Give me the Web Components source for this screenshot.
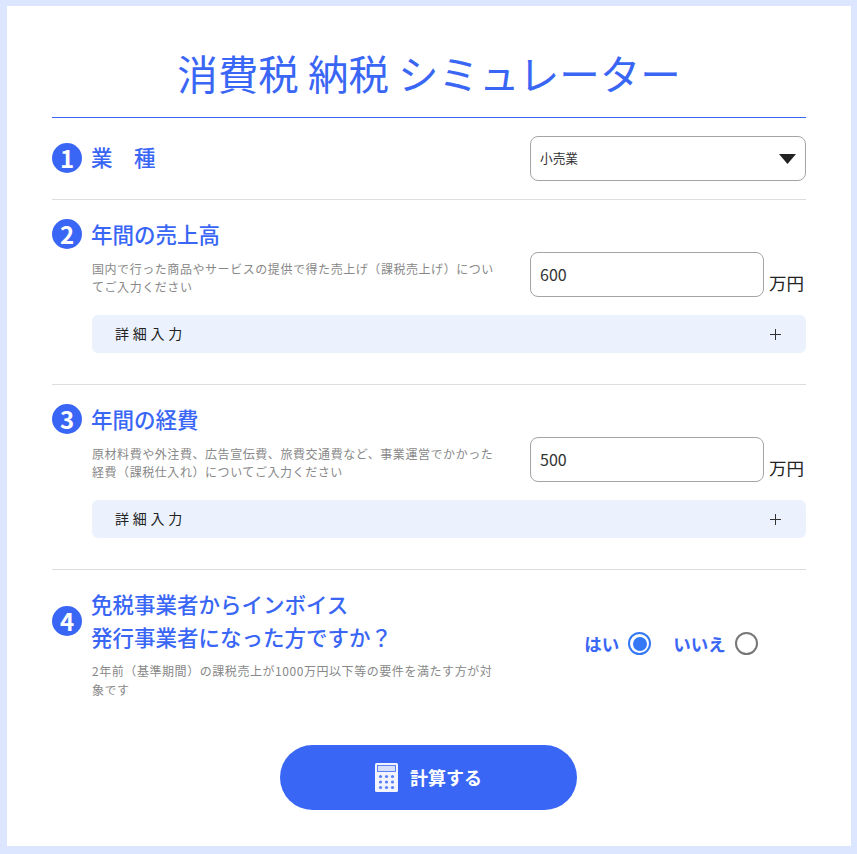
<!DOCTYPE html>
<html lang="ja">
<head>
<meta charset="utf-8">
<title>消費税 納税 シミュレーター</title>
<style>
  html, body { margin: 0; padding: 0; }
  body {
    font-family: "Noto Sans CJK JP", "Noto Sans", sans-serif;
    color: #222;
    background: #fff;
  }
</style>
</head>
<body>
<tax-simulator>
  <sim-section num="1" inline>
    <span slot="title">業　種</span>
    <sim-select slot="control">小売業</sim-select>
  </sim-section>
  <sim-section num="2">
    <span slot="title">年間の売上高</span>
    <span slot="desc">国内で行った商品やサービスの提供で得た売上げ（課税売上げ）についてご入力ください</span>
    <sim-amount slot="control">600</sim-amount>
    <detail-bar slot="details">詳細入力</detail-bar>
  </sim-section>
  <sim-section num="3">
    <span slot="title">年間の経費</span>
    <span slot="desc">原材料費や外注費、広告宣伝費、旅費交通費など、事業運営でかかった経費（課税仕入れ）についてご入力ください</span>
    <sim-amount slot="control">500</sim-amount>
    <detail-bar slot="details">詳細入力</detail-bar>
  </sim-section>
  <sim-question num="4">
    <span slot="title">免税事業者からインボイス<br>発行事業者になった方ですか？</span>
    <span slot="desc">2年前（基準期間）の課税売上が1000万円以下等の要件を満たす方が対象です</span>
    <radio-choice slot="control" checked>はい</radio-choice>
    <radio-choice slot="control">いいえ</radio-choice>
  </sim-question>
  <calc-button>計算する</calc-button>
</tax-simulator>

<script>
// Shared values for the simulator components
const BLUE = '#3a66f5';

class TaxSimulator extends HTMLElement {
  constructor() {
    super();
    this.attachShadow({ mode: 'open' });
    this.shadowRoot.innerHTML = `
      <style>
        :host {
          display: block;
          box-sizing: border-box;
          width: 857px;
          height: 854px;
          border-style: solid;
          border-color: #dde6ff;
          border-width: 6px 6px 8px 7px;
          background: #fff;
          padding: 0 45px;
        }
        h1 {
          margin: 0;
          padding: 36px 0 14px;
          font-size: 40.5px;
          font-weight: 400;
          line-height: 61px;
          text-align: center;
          color: ${BLUE};
          border-bottom: 1px solid ${BLUE};
        }
      </style>
      <h1>消費税 納税 シミュレーター</h1>
      <slot></slot>
    `;
  }
}

class NumBadge extends HTMLElement {
  constructor() {
    super();
    this.attachShadow({ mode: 'open' });
    this.shadowRoot.innerHTML = `
      <style>
        :host {
          display: flex;
          flex: none;
          align-items: center;
          justify-content: center;
          width: 30px;
          height: 30px;
          border-radius: 50%;
          background: ${BLUE};
          color: #fff;
          font-size: 24px;
          font-weight: 700;
          line-height: 1;
        }
      </style>
      <slot></slot>
    `;
  }
}

class SimSection extends HTMLElement {
  constructor() {
    super();
    this.attachShadow({ mode: 'open' });
    const num = this.getAttribute('num');
    this.shadowRoot.innerHTML = `
      <style>
        :host {
          display: block;
          padding: 19px 0 31px;
          border-bottom: 1px solid #ddd;
        }
        :host([inline]) {
          padding: 18px 0;
        }
        :host([inline]) .main {
          display: flex;
          align-items: center;
          justify-content: space-between;
        }
        :host([inline]) .head {
          margin-bottom: 1px;
        }
        :host([inline]) .title {
          margin-bottom: 3px;
        }
        .head {
          display: flex;
          align-items: center;
          gap: 9px;
          height: 30px;
          color: ${BLUE};
          font-size: 21.5px;
          font-weight: 500;
          line-height: 28px;
        }
        .title {
          margin-bottom: 1px;
        }
        .body {
          display: flex;
          align-items: flex-start;
          justify-content: space-between;
          margin-top: 3px;
        }
        :host([inline]) .body { margin: 0; }
        .desc {
          width: 405px;
          margin: 7.5px 0 0 40px;
          font-size: 12px;
          letter-spacing: 0.56px;
          line-height: 18.5px;
          color: #888;
        }
        :host([inline]) .desc { display: none; }
        .details { margin: 18px 0 0 40px; }
        :host([inline]) .details { display: none; }
      </style>
      <div class="main">
        <div class="head"><num-badge>${num}</num-badge><div class="title"><slot name="title"></slot></div></div>
        <div class="body">
          <div class="desc"><slot name="desc"></slot></div>
          <slot name="control"></slot>
        </div>
      </div>
      <div class="details"><slot name="details"></slot></div>
    `;
  }
}

class SimQuestion extends HTMLElement {
  constructor() {
    super();
    this.attachShadow({ mode: 'open' });
    const num = this.getAttribute('num');
    this.shadowRoot.innerHTML = `
      <style>
        :host {
          display: flex;
          align-items: center;
          justify-content: space-between;
          padding: 17px 0 0;
        }
        .head {
          display: flex;
          align-items: center;
          gap: 9px;
          color: ${BLUE};
          font-size: 21.5px;
          font-weight: 500;
          line-height: 33px;
        }
        .title {
          padding-bottom: 2px;
        }
        .desc {
          width: 405px;
          margin: 6px 0 0 40px;
          font-size: 12px;
          letter-spacing: 0.56px;
          line-height: 19px;
          color: #888;
        }
        .choices {
          display: flex;
          gap: 22px;
          justify-content: center;
          box-sizing: border-box;
          width: 276px;
          margin-top: 1px;
          padding-left: 6px;
        }
      </style>
      <div>
        <div class="head"><num-badge>${num}</num-badge><div class="title"><slot name="title"></slot></div></div>
        <div class="desc"><slot name="desc"></slot></div>
      </div>
      <div class="choices"><slot name="control"></slot></div>
    `;
  }
}

class SimSelect extends HTMLElement {
  constructor() {
    super();
    this.attachShadow({ mode: 'open' });
    this.shadowRoot.innerHTML = `
      <style>
        :host {
          display: flex;
          align-items: center;
          justify-content: space-between;
          box-sizing: border-box;
          width: 276px;
          height: 45px;
          padding: 0 9px 2px;
          border: 1px solid #a5a5a5;
          border-radius: 8px;
          font-size: 12.7px;
          color: #333;
        }
        svg { display: block; margin-top: 2px; }
      </style>
      <slot></slot>
      <svg width="17" height="10" viewBox="0 0 17 10"><path d="M0 0H17L8.5 10Z" fill="#222"/></svg>
    `;
  }
}

class SimAmount extends HTMLElement {
  constructor() {
    super();
    this.attachShadow({ mode: 'open' });
    this.shadowRoot.innerHTML = `
      <style>
        :host {
          display: flex;
          align-items: flex-end;
          gap: 5px;
          width: 276px;
        }
        .box {
          display: flex;
          align-items: center;
          box-sizing: border-box;
          width: 234px;
          height: 45px;
          padding: 0 9px 2px;
          border: 1px solid #a5a5a5;
          border-radius: 8px;
          font-size: 16px;
          color: #333;
        }
        .unit {
          padding-bottom: 1px;
          font-size: 17.5px;
          line-height: 26px;
          color: #222;
        }
      </style>
      <div class="box"><slot></slot></div>
      <span class="unit">万円</span>
    `;
  }
}

class DetailBar extends HTMLElement {
  constructor() {
    super();
    this.attachShadow({ mode: 'open' });
    this.shadowRoot.innerHTML = `
      <style>
        :host {
          display: flex;
          align-items: center;
          justify-content: space-between;
          box-sizing: border-box;
          height: 38px;
          padding: 0 25px 2px 23px;
          border-radius: 6px;
          background: #ebf2fe;
          font-size: 14px;
          font-weight: 400;
          letter-spacing: 0.27em;
          color: #222;
        }
        svg { display: block; margin-top: 2px; }
      </style>
      <span><slot></slot></span>
      <svg width="11" height="11" viewBox="0 0 11 11"><path d="M5.5 0V11M0 5.5H11" stroke="#333" fill="none"/></svg>
    `;
  }
}

class RadioChoice extends HTMLElement {
  constructor() {
    super();
    this.attachShadow({ mode: 'open' });
    this.shadowRoot.innerHTML = `
      <style>
        :host {
          display: flex;
          align-items: center;
          gap: 9px;
          color: ${BLUE};
          font-size: 17.5px;
          font-weight: 700;
        }
        .ring {
          box-sizing: border-box;
          width: 23px;
          height: 23px;
          padding: 2.5px;
          border: 2px solid #777;
          border-radius: 50%;
          background-clip: content-box;
        }
        :host([checked]) .ring {
          border-color: #3478f6;
          background-color: #3478f6;
        }
      </style>
      <span><slot></slot></span>
      <span class="ring"></span>
    `;
  }
}

class CalcButton extends HTMLElement {
  constructor() {
    super();
    this.attachShadow({ mode: 'open' });
    this.shadowRoot.innerHTML = `
      <style>
        :host {
          display: flex;
          align-items: center;
          justify-content: center;
          gap: 12px;
          box-sizing: border-box;
          width: 297px;
          height: 65px;
          margin: 46px 0 0 228px;
          padding-bottom: 1px;
          border-radius: 33px;
          background: ${BLUE};
          color: #fff;
          font-size: 18px;
          font-weight: 700;
        }
        svg { display: block; }
      </style>
      <svg width="23" height="29" viewBox="0 0 23 29">
        <rect width="23" height="29" rx="1.5" fill="#f2f5ff"/>
        <rect x="2.5" y="2.5" width="18" height="6" fill="#d8e1fc" stroke="#3a66f5" stroke-width=".8"/>
        <g fill="#5b80f5">
          <circle cx="5.5" cy="13.5" r="1.6"/><circle cx="11.5" cy="13.5" r="1.6"/><circle cx="17.5" cy="13.5" r="1.6"/>
          <circle cx="5.5" cy="19" r="1.6"/><circle cx="11.5" cy="19" r="1.6"/><circle cx="17.5" cy="19" r="1.6"/>
          <circle cx="5.5" cy="24.5" r="1.6"/><circle cx="11.5" cy="24.5" r="1.6"/><circle cx="17.5" cy="24.5" r="1.6"/>
        </g>
      </svg>
      <span><slot></slot></span>
    `;
  }
}

customElements.define('tax-simulator', TaxSimulator);
customElements.define('num-badge', NumBadge);
customElements.define('sim-section', SimSection);
customElements.define('sim-question', SimQuestion);
customElements.define('sim-select', SimSelect);
customElements.define('sim-amount', SimAmount);
customElements.define('detail-bar', DetailBar);
customElements.define('radio-choice', RadioChoice);
customElements.define('calc-button', CalcButton);
</script>
</body>
</html>
